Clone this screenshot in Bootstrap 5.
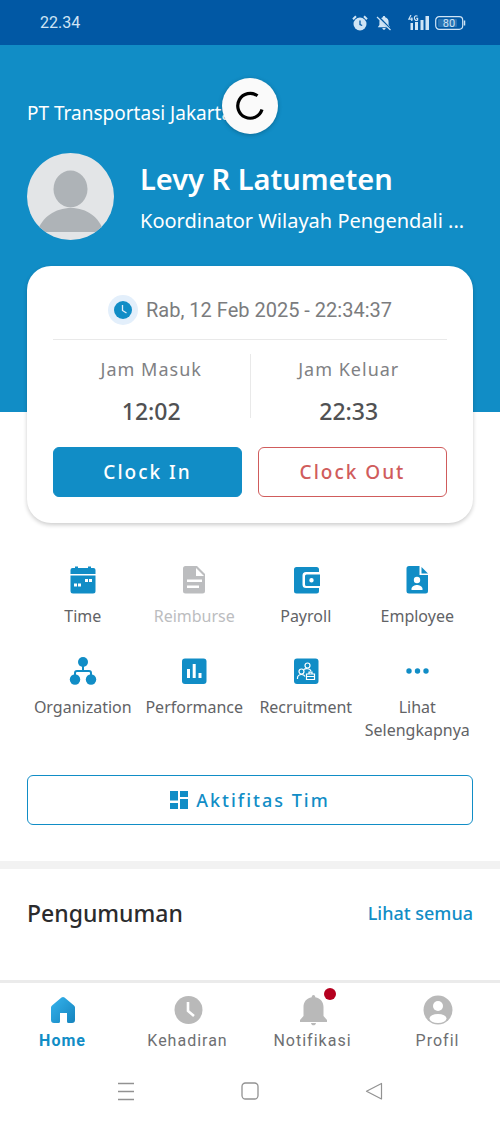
<!DOCTYPE html>
<html lang="id">
<head>
<meta charset="utf-8">
<meta name="viewport" content="width=device-width, initial-scale=1">
<title>Beranda</title>
<link href="https://cdn.jsdelivr.net/npm/bootstrap@5.3.0/dist/css/bootstrap.min.css" rel="stylesheet">
<style>
  :root { --brand: #118dc6; --brand-dark: #0158a4; --out: #d05c5c; --pad: 27px; }
  body { font-family: "Noto Sans", sans-serif; background: #fff; color: #58595b; }
  svg { display: block; flex-shrink: 0; }
  .px-page { padding-left: var(--pad); padding-right: var(--pad); }
  .status-bar { background: var(--brand-dark); color: #cfe4f5; height: 45px; padding: 0 34px 0 40px; font: 16px Roboto, sans-serif; }
  .hero { background: var(--brand); color: #fff; padding-top: 54px; padding-bottom: 172px; }
  .company { font-size: 19px; line-height: 28px; margin-bottom: 26px; }
  .spinner-disc { width: 56px; height: 56px; top: 33px; background: #fafafa; box-shadow: 0 1px 4px rgba(0,0,0,.25); }
  .avatar { width: 87px; height: 87px; }
  .person { padding-left: 26px; }
  .person-name { font-size: 29px; line-height: 40px; font-weight: 600; }
  .person-role { font-size: 20px; line-height: 28px; margin-top: 8px; }
  .clock-card { margin-top: -146px; border: 0; border-radius: 24px; padding: 26px; box-shadow: 0 2px 4px rgba(0,0,0,.2); }
  .date-row { font: 20px/36px Roboto, sans-serif; color: #7b7c7e; padding-bottom: 11px; border-bottom: 1px solid #e9e9e9; }
  .clock-dot { width: 30px; height: 30px; background: #e3effb; }
  .time-row { margin: 14px 0 22px; }
  .time-row > div { padding-bottom: 0; }
  .time-split { width: 1px; height: 64px; background: #e9e9e9; }
  .time-label { font-size: 18px; line-height: 30px; letter-spacing: 1px; color: #808184; }
  .time-value { font-size: 23px; line-height: 28px; font-weight: 500; margin-top: 13px; color: #505153; }
  .btn-tall { height: 50px; font-size: 19px; font-weight: 500; letter-spacing: 2px; border-radius: 6px; padding: 0; }
  .btn-in { --bs-btn-bg: var(--brand); --bs-btn-color: #fff; --bs-btn-border-color: var(--brand); --bs-btn-hover-bg: var(--brand-dark); --bs-btn-hover-color: #fff; }
  .btn-out { --bs-btn-color: var(--out); --bs-btn-border-color: var(--out); --bs-btn-hover-bg: var(--out); --bs-btn-hover-color: #fff; }
  .btn-team { --bs-btn-color: var(--brand); --bs-btn-border-color: var(--brand); --bs-btn-hover-bg: var(--brand); --bs-btn-hover-color: #fff; font-size: 18px; }
  .menu-grid { margin-top: 43px; margin-bottom: 33px; row-gap: 29px; }
  .menu-item { font-size: 16px; line-height: 23px; color: #626366; gap: 11px; }
  .menu-item svg { color: var(--brand); }
  .menu-off, .menu-off svg { color: #bcbdbf; }
  .band { height: 8px; background: #f2f2f2; margin-top: 36px; }
  .section-title { font-size: 23px; line-height: 32px; font-weight: 500; color: #2b2b2d; }
  .see-all { font-size: 18px; font-weight: 500; color: var(--brand); }
  .tab-bar { border-top: 3px solid #ebebeb; padding-top: 11px; }
  .tab-link { font: 16px/24px Roboto, sans-serif; letter-spacing: 1px; color: #6e6f72; gap: 3px; }
  .tab-link svg { color: #b9b9b9; }
  .tab-link.active { color: var(--brand); font-weight: 700; }
  .notif-dot { width: 12px; height: 12px; background: #b5001f; top: -6px; right: -7px; }
  .sys-bar { padding: 26px 64px 18px; color: #929292; }
  .sys-bar button { color: inherit; }
</style>
</head>
<body class="d-flex flex-column min-vh-100">

<div class="status-bar d-flex justify-content-between align-items-center">
  <span>22.34</span>
  <div class="d-flex align-items-center">
    <svg width="16" height="16" viewBox="0 0 16 16" aria-label="Alarm"><circle cx="8" cy="9" r="6.500" fill="currentColor"/><path d="M1 4.200 4 1.200M15 4.200l-3-3" stroke="currentColor" stroke-width="2"/><path d="M8 5.500V9.500l2.200 1" fill="none" stroke="#0158a4" stroke-width="1.300"/></svg>
    <svg class="ms-2" width="16" height="16" viewBox="0 0 16 16" aria-label="Senyap"><path d="M8 1c.8 0 1.200.5 1.200 1.200C11.500 2.800 12.600 4.600 12.600 7v3l1.600 2.200H1.800L3.400 10V7c0-2.400 1.100-4.200 3.400-4.800C6.800 1.500 7.200 1 8 1zM6.300 13h3.400c-.2 1.200-.8 1.800-1.700 1.800S6.500 14.200 6.300 13z" fill="currentColor"/><path d="M2 1.500 15 15" stroke="#0158a4" stroke-width="2.400"/><path d="M1 2 14.500 15" stroke="currentColor" stroke-width="1.200"/></svg>
    <svg class="ms-3" width="22" height="16" viewBox="0 0 22 16" aria-label="4G"><path d="M3 0 .8 4.200h4M3.800 2.500V6M9.500 1.200C8 .2 6.400 1 6.400 3s1.700 3 3.200 2V3.400H8.300" fill="none" stroke="currentColor" stroke-width="1.200"/><path d="M2.500 8h2.500v7H2.500zM7 7h3v8H7zM12.500 5h3v10h-3zM17.500 1h3.500v14h-3.500z" fill="currentColor"/></svg>
    <svg class="ms-1" width="32" height="16" viewBox="0 0 32 16" aria-label="Baterai 80"><rect x="1.700" y="1.700" width="27" height="12.600" rx="3.500" fill="none" stroke="currentColor" stroke-width="1.200"/><path d="M30.500 5.500v5" stroke="currentColor" stroke-width="1.500"/><rect x="4" y="4" width="19" height="8" rx="1" fill="currentColor" opacity=".2"/><text x="15" y="12" text-anchor="middle" font-family="Roboto" font-size="11" fill="currentColor">80</text></svg>
  </div>
</div>

<header class="hero px-page position-relative">
  <div class="company">PT Transportasi Jakarta</div>
  <div class="spinner-disc position-absolute start-50 translate-middle-x rounded-circle d-flex align-items-center justify-content-center" role="status" aria-label="Memuat">
    <svg width="30" height="30" viewBox="0 0 30 30"><path d="M22.500 4.800A12.400 12.400 0 1 0 27 18.500" fill="none" stroke="#000" stroke-width="3.200"/></svg>
  </div>
  <div class="d-flex align-items-center">
    <svg class="avatar rounded-circle" viewBox="0 0 87 87" role="img" aria-label="Foto profil"><rect width="87" height="87" fill="#e3e5e7"/><ellipse cx="43.500" cy="36" rx="17" ry="18.500" fill="#aeb3b7"/><path d="M10 79c5-15 18-24 34-24s28 9 33 24z" fill="#aeb3b7"/></svg>
    <div class="person flex-grow-1 text-truncate">
      <div class="person-name text-truncate">Levy R Latumeten</div>
      <div class="person-role text-truncate">Koordinator Wilayah Pengendali ...</div>
    </div>
  </div>
</header>

<main class="flex-grow-1">
  <div class="px-page">
    <section class="card clock-card">
      <div class="date-row d-flex align-items-center justify-content-center gap-2">
        <span class="clock-dot rounded-circle d-flex align-items-center justify-content-center">
          <svg width="18" height="18" viewBox="0 0 18 18"><circle cx="9" cy="9" r="9" fill="#118dc6"/><path d="M8.500 4v5.500l4 2.500" fill="none" stroke="#e3effb" stroke-width="1.300"/></svg>
        </span>
        <span>Rab, 12 Feb 2025 - 22:34:37</span>
      </div>
      <div class="d-flex text-center time-row">
        <div class="flex-fill w-50"><div class="time-label">Jam Masuk</div><div class="time-value">12:02</div></div>
        <div class="time-split flex-shrink-0"></div>
        <div class="flex-fill w-50"><div class="time-label">Jam Keluar</div><div class="time-value">22:33</div></div>
      </div>
      <div class="d-flex gap-3">
        <button type="button" class="btn btn-tall btn-in w-50">Clock In</button>
        <button type="button" class="btn btn-tall btn-out w-50">Clock Out</button>
      </div>
    </section>

    <nav class="row g-0 menu-grid" aria-label="Menu">
      <div class="col-3"><a href="#" class="menu-item d-flex flex-column align-items-center text-center text-decoration-none">
        <svg width="28" height="28" viewBox="0 0 28 28" fill="currentColor"><path d="M3.500 2H6V.5h3V2h10V.5h3V2h2.500A2 2 0 0 1 26.500 4v4h-25V4a2 2 0 0 1 2-2z"/><path d="M1.500 9.500h25V25a2.500 2.500 0 0 1-2.500 2.500H4A2.500 2.500 0 0 1 1.500 25z"/><path d="M5 17.500h3v3H5zM9 17.500h3v3H9zM16 13h3v3h-3zM20 13h3v3h-3z" fill="#fff"/></svg>
        Time</a></div>
      <div class="col-3"><a href="#" class="menu-item menu-off d-flex flex-column align-items-center text-center text-decoration-none" aria-disabled="true">
        <svg width="28" height="28" viewBox="0 0 28 28" fill="currentColor"><path d="M5.500 0H17l8 8v17a2.500 2.500 0 0 1-2.500 2.500h-17A2.500 2.500 0 0 1 3 25V2.500A2.500 2.500 0 0 1 5.500 0z"/><path d="M16 2v8h8zM7 13.500h15v2.400H7zM7 19.500h12v2.400H7z" fill="#fff"/></svg>
        Reimburse</a></div>
      <div class="col-3"><a href="#" class="menu-item d-flex flex-column align-items-center text-center text-decoration-none">
        <svg width="28" height="28" viewBox="0 0 28 28" fill="currentColor"><path d="M4.500 1h20A2.500 2.500 0 0 1 27 3.500V6H14a3.500 3.500 0 0 0-3.500 3.500v9A3.500 3.500 0 0 0 14 22h13v3a2.500 2.500 0 0 1-2.500 2.500h-20A2.500 2.500 0 0 1 2 25V3.500A2.500 2.500 0 0 1 4.500 1z"/><path fill-rule="evenodd" d="M14.500 8.500h14v11.500h-14a1.500 1.500 0 0 1-1.500-1.500V10a1.500 1.500 0 0 1 1.500-1.500zm5 3.500a2.200 2.200 0 1 0 0 4.400 2.200 2.200 0 0 0 0-4.400z"/></svg>
        Payroll</a></div>
      <div class="col-3"><a href="#" class="menu-item d-flex flex-column align-items-center text-center text-decoration-none">
        <svg width="28" height="28" viewBox="0 0 28 28" fill="currentColor"><path d="M6 0h10.500v9H25v16a2.500 2.500 0 0 1-2.500 2.500H6A2.500 2.500 0 0 1 3.500 25V2.500A2.500 2.500 0 0 1 6 0z"/><path d="M18.500 1 25 7.500h-6.500z"/><circle cx="14" cy="14" r="3.200" fill="#fff"/><path d="M8.500 24v-1.200c0-2.500 3.500-3.800 5.500-3.800s5.500 1.300 5.500 3.800V24z" fill="#fff"/></svg>
        Employee</a></div>
      <div class="col-3"><a href="#" class="menu-item d-flex flex-column align-items-center text-center text-decoration-none">
        <svg width="28" height="28" viewBox="0 0 28 28" fill="currentColor"><circle cx="14" cy="5" r="5"/><circle cx="6" cy="22.500" r="5.200"/><circle cx="22" cy="22.500" r="5.200"/><path d="M14 8v6M6 20v-4a2 2 0 0 1 2-2h12a2 2 0 0 1 2 2v4" fill="none" stroke="currentColor" stroke-width="2"/></svg>
        Organization</a></div>
      <div class="col-3"><a href="#" class="menu-item d-flex flex-column align-items-center text-center text-decoration-none">
        <svg width="28" height="28" viewBox="0 0 28 28" fill="currentColor"><rect x="2" y="1.500" width="24.500" height="25.500" rx="3"/><path d="M7 12h3v9H7zM12.700 7h3v14h-3zM18.500 16h3v5h-3z" fill="#fff"/></svg>
        Performance</a></div>
      <div class="col-3"><a href="#" class="menu-item d-flex flex-column align-items-center text-center text-decoration-none">
        <svg width="28" height="28" viewBox="0 0 28 28" fill="currentColor"><rect x="2" y="1.500" width="24.500" height="25.500" rx="3"/><g fill="none" stroke="#fff" stroke-width="1.200"><circle cx="15.500" cy="8.500" r="2.500"/><circle cx="9.500" cy="14.500" r="2.500"/><path d="M5.500 22v-1c0-2 2-3.500 4-3.500s3 .8 3.500 2M12 12.500c1-1 6-1.500 7 1.500M14.500 17h8v5.500h-8zM17 17v-1.800h3V17M14.500 19.500h8"/></g></svg>
        Recruitment</a></div>
      <div class="col-3"><a href="#" class="menu-item d-flex flex-column align-items-center text-center text-decoration-none">
        <svg width="28" height="28" viewBox="0 0 28 28" fill="currentColor"><circle cx="6" cy="14" r="2.700"/><circle cx="14.500" cy="14" r="2.700"/><circle cx="23" cy="14" r="2.700"/></svg>
        Lihat<br>Selengkapnya</a></div>
    </nav>

    <button type="button" class="btn btn-tall btn-team w-100 d-flex align-items-center justify-content-center gap-2">
      <svg width="18" height="18" viewBox="0 0 18 18" fill="currentColor"><path d="M0 0h8v9.500H0zM10 0h8v6h-8zM0 12h8v6H0zM10 8h8v10h-8z"/></svg>
      <span>Aktifitas Tim</span>
    </button>
  </div>

  <div class="band"></div>

  <section class="px-page d-flex justify-content-between align-items-center pt-4 mt-1 pb-5">
    <h2 class="section-title mb-0">Pengumuman</h2>
    <a href="#" class="see-all text-decoration-none">Lihat semua</a>
  </section>
</main>

<footer>
  <nav class="tab-bar row g-0" aria-label="Navigasi utama">
    <div class="col-3"><a href="#" class="tab-link active d-flex flex-column align-items-center text-decoration-none" aria-current="page">
      <svg width="32" height="32" viewBox="0 0 32 32"><defs><linearGradient id="homeFill" x1="0" y1="0" x2="1" y2="1"><stop offset="0" stop-color="#35b4ee"/><stop offset="1" stop-color="#1583bd"/></linearGradient></defs><path d="M14.500 3.500a2.400 2.400 0 0 1 3 0l9.500 8c.7.600 1 1.200 1 2V26a3 3 0 0 1-3 3h-3.500a1.500 1.500 0 0 1-1.500-1.500V19h-7v8.500a1.500 1.500 0 0 1-1.500 1.500H7a3 3 0 0 1-3-3V13.500c0-.8.300-1.400 1-2z" fill="url(#homeFill)"/></svg>
      Home</a></div>
    <div class="col-3"><a href="#" class="tab-link d-flex flex-column align-items-center text-decoration-none">
      <svg width="32" height="32" viewBox="0 0 32 32"><circle cx="16.500" cy="16" r="14" fill="currentColor"/><path d="M16 8v9l6 5" fill="none" stroke="#fff" stroke-width="2.600"/></svg>
      Kehadiran</a></div>
    <div class="col-3"><a href="#" class="tab-link d-flex flex-column align-items-center text-decoration-none">
      <span class="position-relative">
        <svg width="32" height="32" viewBox="0 0 32 32" fill="currentColor"><path d="M16.500 1c1.200 0 1.800 1 1.800 2.300C23.500 4.300 26.500 8 26.500 13v9l3.500 4v2H3v-2l3.500-4v-9c0-5 3-8.700 8.200-9.700C14.700 2 15.300 1 16.500 1zM14 29h5c-.3 1.500-1.200 2.300-2.500 2.300S14.300 30.500 14 29z"/></svg>
        <span class="notif-dot position-absolute rounded-circle"></span>
      </span>
      Notifikasi</a></div>
    <div class="col-3"><a href="#" class="tab-link d-flex flex-column align-items-center text-decoration-none">
      <svg width="32" height="32" viewBox="0 0 32 32"><circle cx="16" cy="16" r="14.500" fill="currentColor"/><circle cx="16" cy="12" r="5" fill="#fff"/><ellipse cx="16" cy="24.500" rx="8.500" ry="4.500" fill="#fff"/></svg>
      Profil</a></div>
  </nav>
  <div class="sys-bar d-flex justify-content-around align-items-center">
    <button type="button" class="btn p-0 border-0" aria-label="Aplikasi terbaru"><svg width="18" height="24" viewBox="0 0 18 24"><path d="M1 4.500h16M1 12.500h16M1 20.500h16" stroke="currentColor" stroke-width="1.300"/></svg></button>
    <button type="button" class="btn p-0 border-0" aria-label="Layar utama"><svg width="18" height="24" viewBox="0 0 18 24"><rect x="1" y="4" width="16" height="16" rx="3.500" fill="none" stroke="currentColor" stroke-width="1.300"/></svg></button>
    <button type="button" class="btn p-0 border-0" aria-label="Kembali"><svg width="18" height="24" viewBox="0 0 18 24"><path d="M16.500 4.500v15.500L1.500 12.300z" fill="none" stroke="currentColor" stroke-width="1.200" stroke-linejoin="round"/></svg></button>
  </div>
</footer>

<script src="https://cdn.jsdelivr.net/npm/bootstrap@5.3.0/dist/js/bootstrap.bundle.min.js"></script>
</body>
</html>
